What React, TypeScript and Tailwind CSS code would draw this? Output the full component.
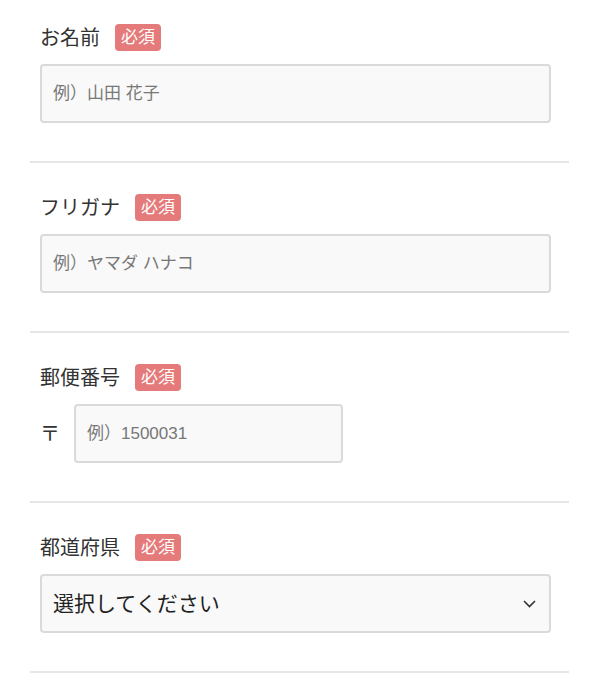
import React from 'react';

const font = { fontFamily: '"Liberation Sans", "Noto Sans CJK JP", sans-serif' };

const Badge: React.FC = () => (
  <span className="ml-[15px] inline-flex h-[27px] items-center rounded-[4px] bg-[#e57a7a] px-[6px] text-[17px] leading-none text-white">
    必須
  </span>
);

const Label: React.FC<{ text: string }> = ({ text }) => (
  <div className="flex h-[27px] items-center">
    <span className="text-[20px] leading-none text-[#333]">{text}</span>
    <Badge />
  </div>
);

const inputCls =
  'h-[59px] rounded-[4px] border-2 border-[#dadada] bg-[#f9f9f9] px-[11px] text-[17px] text-[#333] outline-none placeholder:text-[#777]';

const Section: React.FC<{ first?: boolean; children: React.ReactNode }> = ({ first, children }) => (
  <div
    className={`border-b-2 border-[#e6e6e6] pb-[38px] pl-[10px] pr-[18px] ${first ? 'pt-[24px]' : 'pt-[31px]'}`}
  >
    {children}
  </div>
);

export default function App() {
  return (
    <div className="min-h-screen bg-white px-[30px]" style={font}>
      <div className="w-[539px]">
        <Section first>
          <Label text="お名前" />
          <input className={`mt-[13px] w-full ${inputCls}`} placeholder="例）山田 花子" />
        </Section>

        <Section>
          <Label text="フリガナ" />
          <input className={`mt-[13px] w-full ${inputCls}`} placeholder="例）ヤマダ ハナコ" />
        </Section>

        <Section>
          <Label text="郵便番号" />
          <div className="mt-[13px] flex items-center">
            <span className="mr-[14px] w-[20px] text-[20px] leading-none text-[#333]">〒</span>
            <input className={`w-[269px] ${inputCls}`} placeholder="例）1500031" />
          </div>
        </Section>

        <Section>
          <Label text="都道府県" />
          <div className="relative mt-[13px]">
            <div className="flex h-[59px] w-full items-center rounded-[4px] border-2 border-[#dadada] bg-[#f9f9f9] px-[11px] text-[21px] text-[#222]">
              選択してください
            </div>
            <svg
              className="pointer-events-none absolute right-[15px] top-1/2 -translate-y-1/2"
              width="13"
              height="8"
              viewBox="0 0 13 8"
              fill="none"
            >
              <path d="M1 1l5.5 5.5L12 1" stroke="#333" strokeWidth="1.6" />
            </svg>
          </div>
        </Section>
      </div>
    </div>
  );
}
